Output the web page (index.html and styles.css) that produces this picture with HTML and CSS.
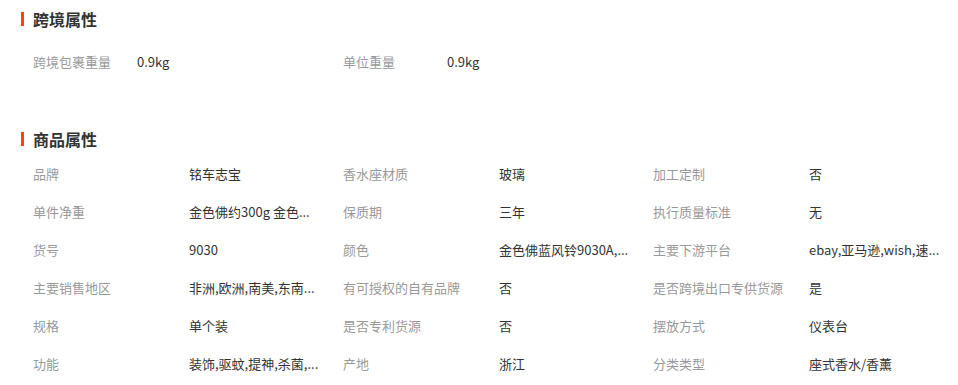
FILE: index.html
```html
<!DOCTYPE html>
<html lang="zh">
<head>
<meta charset="utf-8">
<link rel="stylesheet" href="styles.css">
</head>
<body>
<section class="block block-first">
  <h2 class="title">跨境属性</h2>
  <div class="grid grid-cross">
    <div class="cell"><span class="label">跨境包裹重量</span><span class="value">0.9kg</span></div>
    <div class="cell"><span class="label">单位重量</span><span class="value">0.9kg</span></div>
  </div>
</section>
<section class="block block-second">
  <h2 class="title">商品属性</h2>
  <div class="grid grid-goods">
    <div class="cell"><span class="label">品牌</span><span class="value">铭车志宝</span></div>
    <div class="cell"><span class="label">香水座材质</span><span class="value">玻璃</span></div>
    <div class="cell"><span class="label">加工定制</span><span class="value">否</span></div>
    <div class="cell"><span class="label">单件净重</span><span class="value">金色佛约300g 金色...</span></div>
    <div class="cell"><span class="label">保质期</span><span class="value">三年</span></div>
    <div class="cell"><span class="label">执行质量标准</span><span class="value">无</span></div>
    <div class="cell"><span class="label">货号</span><span class="value">9030</span></div>
    <div class="cell"><span class="label">颜色</span><span class="value">金色佛蓝风铃9030A,...</span></div>
    <div class="cell"><span class="label">主要下游平台</span><span class="value">ebay,亚马逊,wish,速...</span></div>
    <div class="cell"><span class="label">主要销售地区</span><span class="value">非洲,欧洲,南美,东南...</span></div>
    <div class="cell"><span class="label">有可授权的自有品牌</span><span class="value">否</span></div>
    <div class="cell"><span class="label">是否跨境出口专供货源</span><span class="value">是</span></div>
    <div class="cell"><span class="label">规格</span><span class="value">单个装</span></div>
    <div class="cell"><span class="label">是否专利货源</span><span class="value">否</span></div>
    <div class="cell"><span class="label">摆放方式</span><span class="value">仪表台</span></div>
    <div class="cell"><span class="label">功能</span><span class="value">装饰,驱蚊,提神,杀菌,...</span></div>
    <div class="cell"><span class="label">产地</span><span class="value">浙江</span></div>
    <div class="cell"><span class="label">分类类型</span><span class="value">座式香水/香薰</span></div>
  </div>
</section>
</body>
</html>
```
FILE: styles.css
```css
html, body {
  margin: 0;
  padding: 0;
  background: #fff;
}
body {
  font-family: "Microsoft YaHei", "Noto Sans CJK SC", "Noto Sans", sans-serif;
  font-size: 13px;
  color: #333;
  width: 958px;
  height: 385px;
  overflow: hidden;
}
.block {
  padding-left: 21px;
}
.block-first {
  padding-top: 9px;
  height: 120px;
}
.block-second {
  padding-top: 0;
}
.title {
  margin: 0;
  display: flex;
  align-items: center;
  height: 20px;
  font-size: 16px;
  font-weight: bold;
  color: #333;
  line-height: 20px;
}
.title::before {
  content: "";
  display: block;
  width: 3px;
  height: 14px;
  background: #ff4400;
  margin-right: 9px;
}
.grid {
  display: grid;
  grid-template-columns: repeat(3, 310px);
  padding-left: 12px;
}
.grid-cross {
  margin-top: 14px;
}
.grid-goods {
  margin-top: 6px;
}
.cell {
  display: flex;
  height: 38px;
  align-items: center;
  line-height: 18px;
  padding-bottom: 1px;
  box-sizing: border-box;
}
.label {
  color: #999;
  flex: none;
}
.grid-cross .label {
  width: 104px;
}
.grid-goods .label {
  width: 156px;
}
.value {
  color: #333;
  white-space: nowrap;
}
```
